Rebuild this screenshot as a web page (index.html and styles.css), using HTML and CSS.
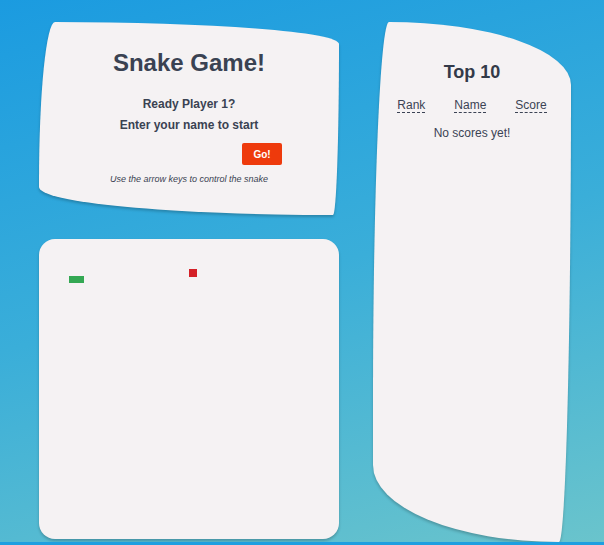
FILE: index.html
```html
<!DOCTYPE html>
<html lang="en">
<head>
<meta charset="utf-8">
<title>Snake Game</title>
<link rel="stylesheet" href="styles.css">
</head>
<body>
<div class="page">
  <div class="left-col">
    <section class="card intro">
      <h1 class="title">Snake Game!</h1>
      <p class="prompt">Ready Player 1?</p>
      <p class="prompt">Enter your name to start</p>
      <form class="name-form" onsubmit="return false">
        <input class="name-input" type="text" aria-label="Name">
        <button class="go-btn" type="submit">Go!</button>
      </form>
      <p class="hint">Use the arrow keys to control the snake</p>
    </section>
    <section class="card board">
      <svg class="board-svg" viewBox="0 0 400 400" width="300" height="300">
        <rect x="40" y="49" width="20" height="10" fill="#34a853"/>
        <rect x="200" y="40" width="10" height="10" fill="#d42027"/>
      </svg>
    </section>
  </div>
  <section class="card scores">
    <h2 class="scores-title">Top 10</h2>
    <div class="score-head">
      <span class="col-head">Rank</span>
      <span class="col-head">Name</span>
      <span class="col-head">Score</span>
    </div>
    <p class="empty">No scores yet!</p>
  </section>
</div>
</body>
</html>
```
FILE: styles.css
```css
html, body {
  margin: 0;
  padding: 0;
  background: #1e9fe0;
}
body {
  font-family: "Liberation Sans", Arial, sans-serif;
  color: #3b4354;
}
.page {
  box-sizing: border-box;
  width: 604px;
  height: 542px;
  padding: 22px 0 0 39px;
  display: flex;
  gap: 34px;
  background: linear-gradient(165deg, #1b9be0 0%, #3aaed9 50%, #6ac4cc 100%);
  overflow: hidden;
}
.left-col {
  display: flex;
  flex-direction: column;
  gap: 24px;
  width: 300px;
}
.card {
  background: #f5f2f3;
  box-shadow: 0 2px 3px rgba(0, 0, 0, 0.22);
  box-sizing: border-box;
}
.intro {
  height: 193px;
  border-radius: 16px 284px 6px 294px / 160px 22px 171px 28px;
  display: flex;
  flex-direction: column;
  align-items: center;
  padding-top: 27px;
}
.title {
  margin: 0;
  font-size: 24px;
  font-weight: bold;
  line-height: 28px;
  color: #3a4252;
}
.prompt {
  margin: 0;
  font-size: 12px;
  font-weight: bold;
  line-height: 21px;
  color: #3a4252;
}
.title + .prompt {
  margin-top: 17px;
}
.name-form {
  display: flex;
  gap: 4px;
  margin-top: 7px;
}
.name-input {
  width: 142px;
  height: 22px;
  border: none;
  background: transparent;
  padding: 0;
  outline: none;
}
.go-btn {
  width: 40px;
  height: 22px;
  border: none;
  border-radius: 2px;
  background: #ee3a0c;
  color: #fff;
  font-family: "Liberation Sans", Arial, sans-serif;
  font-weight: bold;
  font-size: 10px;
  padding: 0;
}
.hint {
  margin: 9px 0 0;
  font-size: 9px;
  font-style: italic;
  color: #3a4252;
}
.board {
  height: 300px;
  border-radius: 16px;
  overflow: hidden;
}
.board-svg {
  display: block;
  shape-rendering: crispEdges;
}
.scores {
  width: 198px;
  height: 520px;
  border-radius: 16px 182px 12px 186px / 380px 63px 455px 77px;
  display: flex;
  flex-direction: column;
  align-items: center;
  padding-top: 40px;
}
.scores-title {
  margin: 0;
  font-size: 18px;
  font-weight: bold;
  line-height: 20px;
  color: #333a48;
}
.score-head {
  display: flex;
  gap: 29px;
  margin-top: 16px;
  font-size: 12px;
}
.col-head {
  border-bottom: 1px dashed #3b4354;
  line-height: 14px;
}
.empty {
  margin: 13px 0 0;
  font-size: 12px;
}
```
